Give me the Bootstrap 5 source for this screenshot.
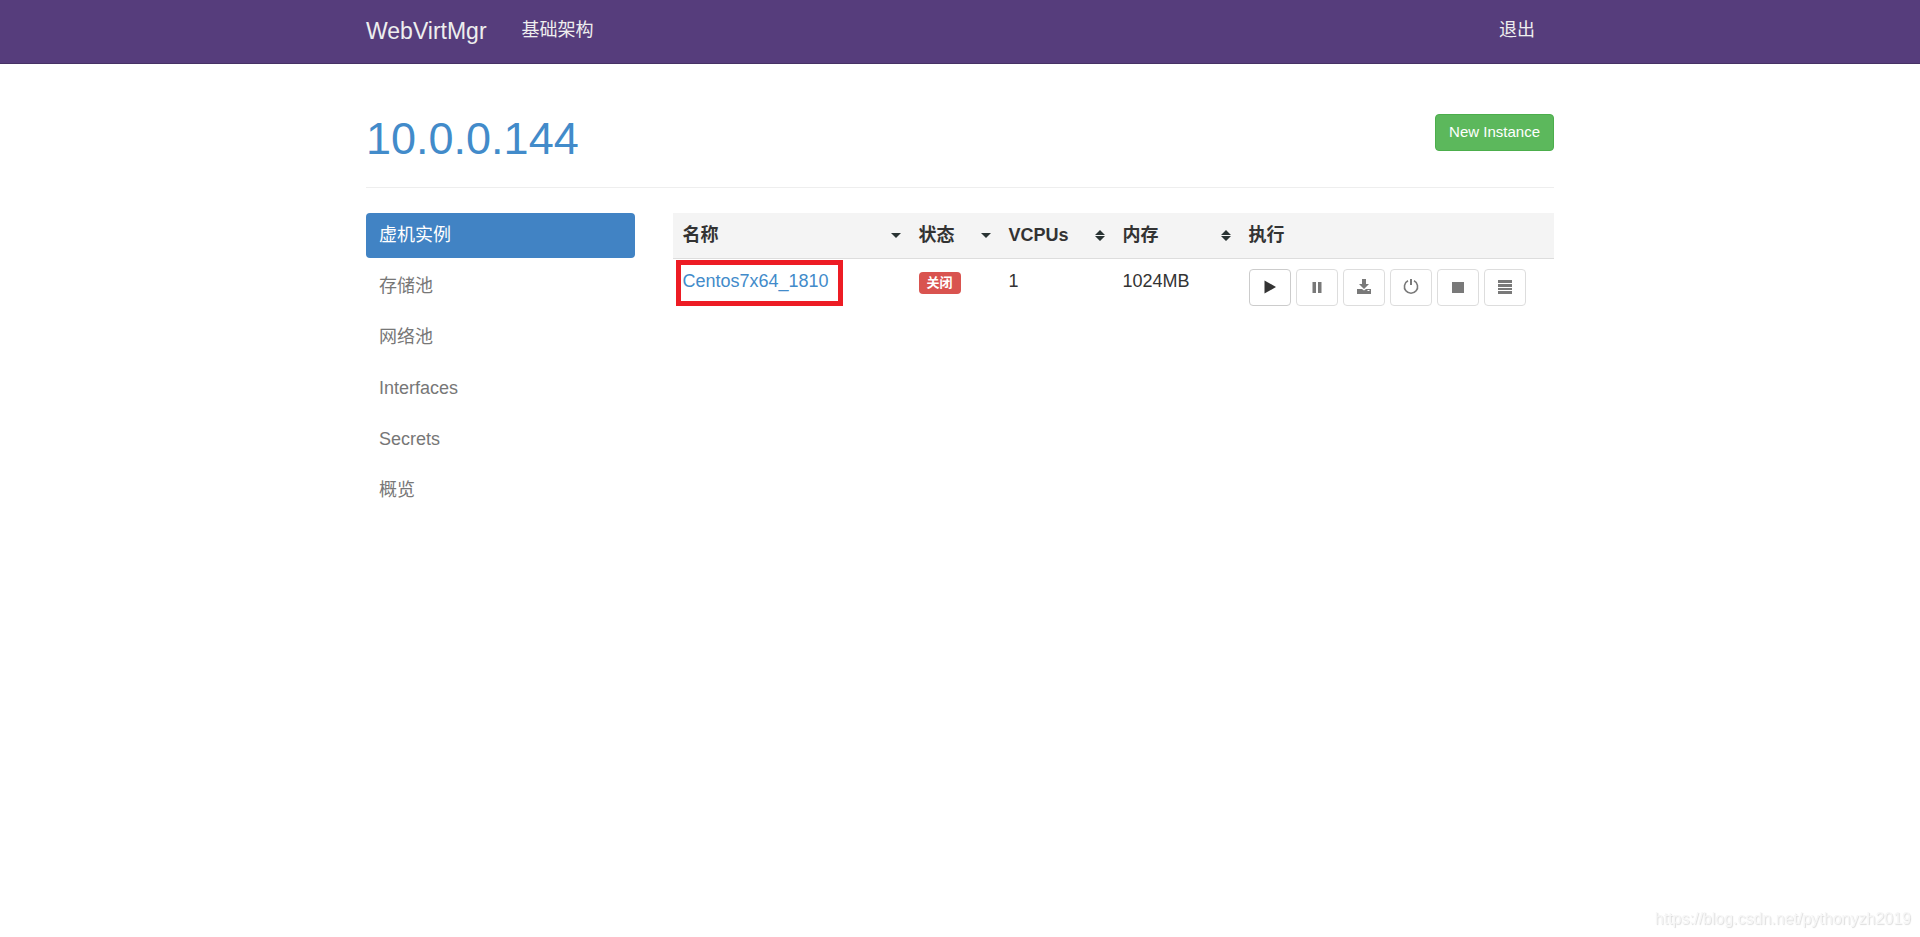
<!DOCTYPE html>
<html lang="zh-CN">
<head>
<meta charset="utf-8">
<meta name="viewport" content="width=device-width, initial-scale=1">
<title>WebVirtMgr</title>
<link href="https://cdn.jsdelivr.net/npm/bootstrap@5.3.0/dist/css/bootstrap.min.css" rel="stylesheet">
<style>
  body { font: 18px/25px "Liberation Sans", "Noto Sans CJK SC", sans-serif; color: #333; background: #fff; }
  a { color: #428bca; text-decoration: none; }
  .site-width { max-width: 1226px; padding-inline: 19px; }
  .row { --bs-gutter-x: 38px; }
  .topbar { background: #563d7c; border-bottom: 1px solid #463265; min-height: 64px; }
  .topbar .navbar-brand { font-size: 23px; line-height: 25px; color: #eee; margin-right: 16px; }
  .topbar .navbar-nav .nav-link { color: #eee; padding: 18px 19px 20px; line-height: 25px; }
  .page-head { margin-top: 50px; padding-bottom: 23px; margin-bottom: 25px; border-bottom: 1px solid #eee; }
  .page-head h1 { font-size: 45px; line-height: 50px; font-weight: 400; }
  .btn-create { background: #5cb85c; border: 1px solid #4cae4c; color: #fff; font-size: 15px; line-height: 23px; padding: 5px 13px 7px; border-radius: 4px; }
  .side-nav { gap: 6px; }
  .side-nav .nav-link { color: #777; padding: 10px 13px; line-height: 25px; border-radius: 4px; }
  .side-nav .nav-link.active { background: #4183c4; color: #fff; }
  .vm-table { table-layout: fixed; line-height: 25px; color: #333; }
  .vm-table > :not(caption) > * > * { padding: 10px; border: 0; color: #333; }
  .vm-table > thead > tr > th { background: #f4f4f4; border-bottom: 1px solid #ddd; }
  .w-name { width: 236px; } .w-state { width: 90px; } .w-cpu { width: 114px; } .w-mem { width: 126px; }
  .sort-mark { width: 10px; height: 12px; fill: #293333; margin-right: -2px; }
  .state-label { display: block; width: 42px; height: 22px; margin-top: 3px; padding: 0; background: #d9534f; font-size: 13px; line-height: 21px; border-radius: 4px; }
  .marked { top: 1px; left: 3px; width: 167px; height: 46px; border: 5px solid #ed1c24; pointer-events: none; }
  .actions { gap: 5px; }
  .btn-act { width: 42px; height: 37px; padding: 0 0 1px; border: 1px solid #ccc; border-radius: 4px; background: #fff; color: #333; display: flex; align-items: center; justify-content: center; }
  .btn-act:disabled { background: #fff; border-color: #ccc; color: #333; opacity: .65; }
  .btn-act svg { width: 16px; height: 16px; fill: currentColor; }
  .site-mark { right: 9px; bottom: 8px; font-size: 16px; line-height: 20px; color: #f7f7f7; text-shadow: 1px 1px 1px #ddd; }
</style>
</head>
<body>
<nav class="navbar navbar-expand topbar p-0">
  <div class="container-fluid site-width">
    <a class="navbar-brand p-0" href="#">WebVirtMgr</a>
    <ul class="navbar-nav flex-grow-1">
      <li class="nav-item"><a class="nav-link" href="#">基础架构</a></li>
      <li class="nav-item ms-auto"><a class="nav-link" href="#">退出</a></li>
    </ul>
  </div>
</nav>

<div class="container-fluid site-width">
  <header class="page-head d-flex justify-content-between align-items-start">
    <h1 class="m-0"><a href="#">10.0.0.144</a></h1>
    <button type="button" class="btn btn-create">New Instance</button>
  </header>

  <div class="row">
    <aside class="col-3">
      <nav class="nav nav-pills flex-column side-nav">
        <a class="nav-link active" aria-current="page" href="#">虚机实例</a>
        <a class="nav-link" href="#">存储池</a>
        <a class="nav-link" href="#">网络池</a>
        <a class="nav-link" href="#">Interfaces</a>
        <a class="nav-link" href="#">Secrets</a>
        <a class="nav-link" href="#">概览</a>
      </nav>
    </aside>
    <main class="col-9">
      <table class="table vm-table mb-0">
        <thead>
          <tr>
            <th class="w-name" scope="col"><div class="d-flex justify-content-between align-items-center">名称<svg class="sort-mark" viewBox="0 0 10 12"><path d="M0 3h10L5 8z"/></svg></div></th>
            <th class="w-state" scope="col"><div class="d-flex justify-content-between align-items-center">状态<svg class="sort-mark" viewBox="0 0 10 12"><path d="M0 3h10L5 8z"/></svg></div></th>
            <th class="w-cpu" scope="col"><div class="d-flex justify-content-between align-items-center">VCPUs<svg class="sort-mark" viewBox="0 0 10 12"><path d="M0 5L5 0l5 5zM0 6h10l-5 5z"/></svg></div></th>
            <th class="w-mem" scope="col"><div class="d-flex justify-content-between align-items-center">内存<svg class="sort-mark" viewBox="0 0 10 12"><path d="M0 5L5 0l5 5zM0 6h10l-5 5z"/></svg></div></th>
            <th scope="col">执行</th>
          </tr>
        </thead>
        <tbody>
          <tr>
            <td class="position-relative"><a href="#">Centos7x64_1810</a><span class="marked position-absolute"></span></td>
            <td><span class="badge state-label">关闭</span></td>
            <td>1</td>
            <td>1024MB</td>
            <td>
              <div class="actions d-flex">
                <button type="button" class="btn btn-act" aria-label="Start"><svg viewBox="0 0 16 16"><path d="M2.500 1.500v13L14 8z"/></svg></button>
                <button type="button" class="btn btn-act" aria-label="Suspend" disabled><svg viewBox="0 0 16 16"><path d="M3.500 3H7v11H3.500zM9 3h3.500v11H9z"/></svg></button>
                <button type="button" class="btn btn-act" aria-label="Save" disabled><svg viewBox="0 0 16 16"><path d="M6 0h4v5h3L8 10 3 5h3z"/><path d="M1 10h5l2 1.500L10 10h5v5H1zm10.500 1v1h2v-1z" fill-rule="evenodd"/></svg></button>
                <button type="button" class="btn btn-act" aria-label="Shutdown" disabled><svg viewBox="0 0 16 16"><path d="M7 0h2v6H7z"/><path d="M5 1.800a6.600 6.600 0 1 0 6 0" fill="none" stroke="currentColor" stroke-width="1.600"/></svg></button>
                <button type="button" class="btn btn-act" aria-label="Force off" disabled><svg viewBox="0 0 16 16"><path d="M2 3h12v11H2z"/></svg></button>
                <button type="button" class="btn btn-act" aria-label="Console" disabled><svg viewBox="0 0 16 16"><path d="M1 1h14v3H1zM1 5h14v3H1zM1 9h14v2H1zM1 12h14v3H1z"/></svg></button>
              </div>
            </td>
          </tr>
        </tbody>
      </table>
    </main>
  </div>
</div>
<div class="site-mark position-fixed">https://blog.csdn.net/pythonyzh2019</div>
<script src="https://cdn.jsdelivr.net/npm/bootstrap@5.3.0/dist/js/bootstrap.bundle.min.js"></script>
</body>
</html>
